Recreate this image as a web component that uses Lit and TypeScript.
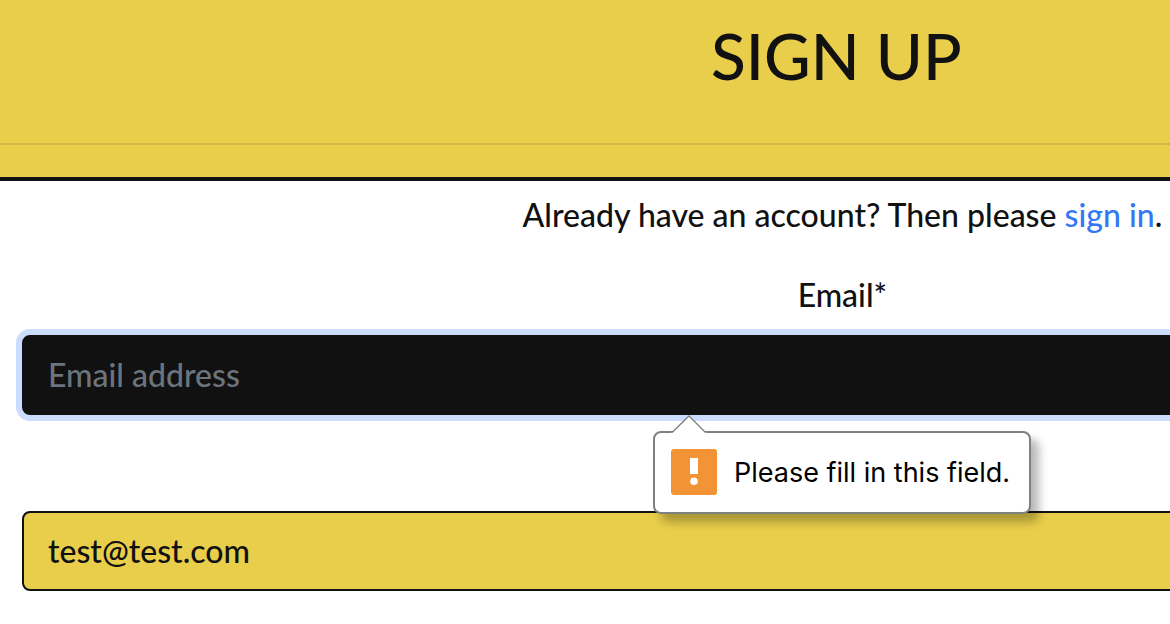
import { LitElement, html, css } from "lit";
import { customElement } from "lit/decorators.js";

@customElement("validation-bubble")
export class ValidationBubble extends LitElement {
  static styles = css`
    :host {
      display: block;
    }
    .bubble {
      position: relative;
      display: flex;
      align-items: flex-start;
      gap: 17px;
      padding: 16px 19px 15px 16px;
      border: 2px solid #808080;
      border-radius: 8px;
      background: #fff;
      box-shadow: 8px 8px 10px rgba(0, 0, 0, 0.28);
      color: #000;
      font: 27px/48px Inter, sans-serif;
      white-space: nowrap;
    }
    .arrow {
      position: absolute;
      left: 16px;
      top: -18px;
      width: 36px;
      height: 18px;
    }
    .icon {
      flex: none;
      width: 46px;
      height: 46px;
    }
  `;

  render() {
    return html`
      <div class="bubble" role="alert">
        <svg class="arrow" viewBox="0 0 36 18" aria-hidden="true">
          <path d="M0 18 L1 17.5 L18 1 L34.5 17.5 L36 18Z" fill="#fff" />
          <path d="M1 17.5 L18 1 L34.5 17.5" fill="none" stroke="#808080" stroke-width="1.3" />
        </svg>
        <svg class="icon" viewBox="0 0 46 46" aria-hidden="true">
          <rect width="46" height="46" rx="3" fill="#f29435" />
          <rect x="19" y="9" width="8" height="16" fill="#fff" />
          <circle cx="23" cy="32.2" r="3.8" fill="#fff" />
        </svg>
        <span><slot></slot></span>
      </div>
    `;
  }
}

@customElement("app-root")
export class AppRoot extends LitElement {
  static styles = css`
    :host {
      display: block;
      overflow: hidden;
      min-height: 100vh;
      background: #fff;
      color: #111;
      font: 500 32px/48px Lato, sans-serif;
    }
    * {
      box-sizing: border-box;
    }
    .page {
      width: 144%;
      text-align: center;
    }
    .header {
      padding: 16px 0 32px;
      border-bottom: 4px solid #111;
      background: #e8ce4b;
    }
    .title {
      margin: 0;
      padding: 0 12px 47px 0;
      border-bottom: 2px solid #d0b843;
      font-size: 64px;
      line-height: 80px;
      font-weight: 500;
    }
    .prompt {
      margin: 0;
      padding-top: 10px;
    }
    .link {
      color: #3478f6;
      text-decoration: none;
    }
    .form {
      display: flex;
      flex-direction: column;
      gap: 96px;
      padding: 32px 22px;
    }
    .field {
      position: relative;
    }
    .label {
      display: block;
      margin-bottom: 16px;
    }
    .input {
      display: block;
      width: 100%;
      height: 80px;
      padding: 12px 24px 14px;
      border: 2px solid #111;
      border-radius: 8px;
      background: #e8ce4b;
      color: #111;
      font: inherit;
      outline: none;
    }
    .input.active {
      background: #111;
      color: #fff;
      box-shadow: 0 0 0 6px #cbdcff;
    }
    .input::placeholder {
      color: #6c757d;
      opacity: 1;
    }
    .hint {
      position: absolute;
      z-index: 1;
      top: 100%;
      left: 631px;
      margin-top: 16px;
      text-align: left;
    }
  `;

  render() {
    return html`
      <div class="page">
        <header class="header">
          <h1 class="title">SIGN UP</h1>
        </header>
        <main>
          <p class="prompt">
            Already have an account? Then please <a class="link" href="#signin">sign in</a>.
          </p>
          <form class="form" novalidate>
            <div class="field">
              <label class="label" for="email">Email*</label>
              <input class="input active" id="email" type="email" placeholder="Email address" required />
              <validation-bubble class="hint">Please fill in this field.</validation-bubble>
            </div>
            <div class="field">
              <input class="input" type="text" aria-label="Username" value="test@test.com" />
            </div>
          </form>
        </main>
      </div>
    `;
  }
}
